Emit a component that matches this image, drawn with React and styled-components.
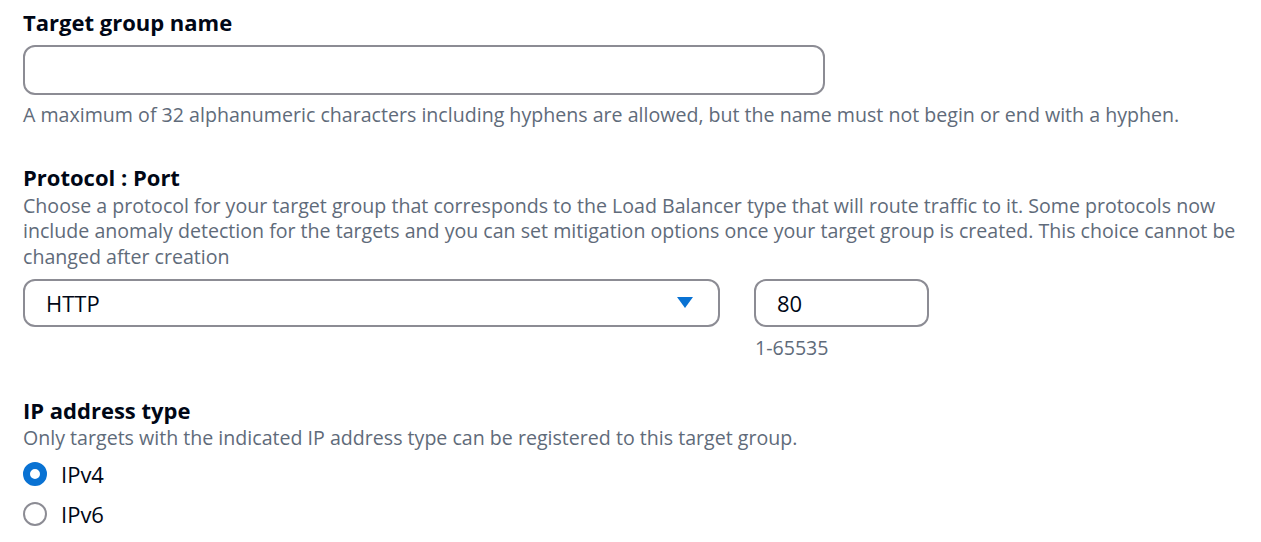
import React from "react";
import styled, { createGlobalStyle } from "styled-components";

const Global = createGlobalStyle`
  html, body { margin: 0; padding: 0; background: #ffffff; }
  body { font-family: "Open Sans", "Noto Sans", sans-serif; color: #000716; }
`;

const Page = styled.div`
  padding: 7px 18px 0 23px;
  display: flex;
  flex-direction: column;
`;

const Field = styled.div`
  display: flex;
  flex-direction: column;
  margin-bottom: ${(p) => p.$gap || 0}px;
`;

const Label = styled.div`
  font-size: 22px;
  font-weight: 700;
  line-height: 30px;
  color: #000716;
`;

const Desc = styled.div`
  font-size: 19.6px;
  line-height: 25.5px;
  color: #5f6b7a;
  margin-top: ${(p) => p.$mt || 0}px;
`;

const TextInput = styled.div`
  box-sizing: border-box;
  width: ${(p) => p.$w}px;
  height: ${(p) => p.$h || 50}px;
  border: 2px solid #8c8c94;
  border-radius: 12px;
  display: flex;
  align-items: center;
  padding: 0 21px;
  font-size: 22px;
  color: #000716;
  margin-top: ${(p) => p.$mt || 0}px;
`;

const Row = styled.div`
  display: flex;
  gap: 34px;
  margin-top: ${(p) => p.$mt || 0}px;
`;

const Col = styled.div`
  display: flex;
  flex-direction: column;
`;

const SelectBox = styled(TextInput)`
  justify-content: space-between;
  padding: 0 25px 0 21px;
`;

const Hint = styled.div`
  font-size: 19.6px;
  color: #5f6b7a;
  line-height: 25px;
  margin-top: 8px;
  padding-left: 1px;
`;

const RadioGroup = styled.div`
  display: flex;
  flex-direction: column;
  margin-top: 3px;
`;

const RadioRow = styled.label`
  display: flex;
  align-items: center;
  height: 40px;
  font-size: 22px;
  color: #000716;
`;

const RadioText = styled.span`
  margin-left: 14px;
`;

const RadioDot = styled.span`
  box-sizing: border-box;
  width: 24px;
  height: 24px;
  border-radius: 50%;
  border: ${(p) => (p.$checked ? "7px solid #0972d3" : "2px solid #8c8c94")};
  background: #fff;
  flex: none;
`;

const Caret = () => (
  <svg width="16" height="12" viewBox="0 0 16 12">
    <path d="M0 0 H16 L8 11 Z" fill="#0972d3" />
  </svg>
);

export default function App() {
  return (
    <>
      <Global />
      <Page>
        <Field $gap={34}>
          <Label>Target group name</Label>
          <TextInput $w={802} $h={50} $mt={8} />
          <Desc $mt={7}>
            A maximum of 32 alphanumeric characters including hyphens are allowed, but the name must not begin or end with a hyphen.
          </Desc>
        </Field>
        <Field $gap={35}>
          <Label>Protocol : Port</Label>
          <Desc $mt={1}>
            Choose a protocol for your target group that corresponds to the Load Balancer type that will route traffic to it. Some protocols now include anomaly detection for the targets and you can set mitigation options once your target group is created. This choice cannot be changed after creation
          </Desc>
          <Row $mt={10}>
            <Col>
              <SelectBox $w={697} $h={48}>
                <span>HTTP</span>
                <Caret />
              </SelectBox>
            </Col>
            <Col>
              <TextInput $w={175} $h={48}>80</TextInput>
              <Hint>1-65535</Hint>
            </Col>
          </Row>
        </Field>
        <Field>
          <Label>IP address type</Label>
          <Desc>Only targets with the indicated IP address type can be registered to this target group.</Desc>
          <RadioGroup>
            <RadioRow>
              <RadioDot $checked />
              <RadioText>IPv4</RadioText>
            </RadioRow>
            <RadioRow>
              <RadioDot />
              <RadioText>IPv6</RadioText>
            </RadioRow>
          </RadioGroup>
        </Field>
      </Page>
    </>
  );
}
